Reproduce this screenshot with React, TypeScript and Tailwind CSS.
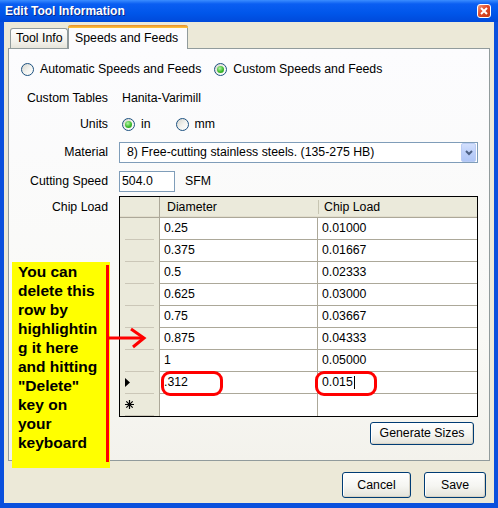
import React from "react";

const rows: [string, string][] = [
  ["0.25", "0.01000"],
  ["0.375", "0.01667"],
  ["0.5", "0.02333"],
  ["0.625", "0.03000"],
  ["0.75", "0.03667"],
  ["0.875", "0.04333"],
  ["1", "0.05000"],
];

function Radio({ checked = false }: { checked?: boolean }) {
  return (
    <span className="inline-flex size-[13px] shrink-0 items-center justify-center rounded-full border border-[#1C5180] bg-[linear-gradient(135deg,#D6D5CE,#F4F4F0_55%,#FFFFFF)]">
      {checked && (
        <span className="size-[7px] rounded-full bg-[radial-gradient(circle_at_40%_35%,#B6F5A8,#3DBB2E_55%,#1F8A1A)]" />
      )}
    </span>
  );
}

function XpButton({ label, className }: { label: string; className: string }) {
  return (
    <div
      className={`flex items-center justify-center rounded-[3px] border border-[#003C74] bg-[linear-gradient(to_bottom,#FFFFFF,#F5F5F1_55%,#E4E3DA)] shadow-[inset_-1px_-1px_0_#D8D3C6,inset_1px_1px_0_#FFFFFF] ${className}`}
    >
      {label}
    </div>
  );
}

function Row({
  label,
  className,
  children,
}: {
  label: string;
  className: string;
  children: React.ReactNode;
}) {
  return (
    <div className={`flex items-center ${className}`}>
      <span className="w-[99px] shrink-0 text-right">{label}</span>
      <div className="ml-[11px] flex items-center">{children}</div>
    </div>
  );
}

function RowHeader({ glyph }: { glyph?: "current" | "new" }) {
  return (
    <div className="flex flex-col border-r border-[#ACA899] bg-[#EBEADB]">
      <div className="flex flex-1 items-center pl-[5px]">
        {glyph === "current" && (
          <svg width="5" height="9" viewBox="0 0 5 9">
            <path d="M0 0 L5 4.5 L0 9 Z" fill="#000" />
          </svg>
        )}
        {glyph === "new" && (
          <svg width="9" height="9" viewBox="0 0 9 9" stroke="#000" strokeWidth="1.2">
            <path d="M4.5 0 V9 M0 4.5 H9 M1.3 1.3 L7.7 7.7 M7.7 1.3 L1.3 7.7" />
          </svg>
        )}
      </div>
      <div className="mx-[5px] h-px bg-[#CBC7B8]" />
    </div>
  );
}

export default function App() {
  return (
    <div className="relative h-[508px] w-[498px] overflow-hidden bg-[#0A50DD] font-['Liberation_Sans',Arial,sans-serif] text-[12.3px] text-black">
      {/* Title bar */}
      <div className="flex h-[22px] items-center justify-between bg-[linear-gradient(to_bottom,#3B8DFF_0%,#0A5EF2_18%,#0056EA_60%,#0049DA_100%)] pl-[5px] pr-[7px]">
        <span className="text-[12px] font-bold text-white [text-shadow:1px_1px_0_#0A2A8A]">
          Edit Tool Information
        </span>
        <div className="flex size-[14px] items-center justify-center rounded-[3px] border border-white bg-[linear-gradient(135deg,#F39A78,#E2492A_45%,#C43810)]">
          <svg width="8" height="8" viewBox="0 0 8 8" stroke="#fff" strokeWidth="2">
            <path d="M1 1 L7 7 M7 1 L1 7" />
          </svg>
        </div>
      </div>

      {/* Dialog body */}
      <div className="mx-[4px] flex h-[481px] flex-col bg-[#ECE9D8]">
        {/* Tabs */}
        <div className="flex h-[26px] items-end pl-[6px]">
          <div className="flex h-[20px] w-[58px] items-center rounded-t-[3px] border border-b-0 border-[#919B9C] bg-[linear-gradient(to_bottom,#FFFFFF,#F1F0EA_70%,#E6E4DA)] pl-[5px]">
            Tool Info
          </div>
          <div className="relative z-10 -mb-px flex h-[24px] w-[120px] flex-col rounded-t-[3px] border-x border-[#919B9C] bg-[#FCFCFE]">
            <div className="-mx-px h-[3px] rounded-t-[3px] bg-[linear-gradient(to_bottom,#E68B2C,#FFC73C)]" />
            <div className="flex flex-1 items-center pl-[6px]">Speeds and Feeds</div>
          </div>
        </div>

        {/* Tab panel */}
        <div className="mx-[4px] flex h-[413px] flex-col border border-[#919B9C] bg-[linear-gradient(to_bottom,#FCFCFE,#F9F9F6_70%,#F3F2EC)] pt-[12px]">
          <div className="flex h-[16px] items-center pl-[12px]">
            <Radio />
            <span className="ml-[6px]">Automatic Speeds and Feeds</span>
            <span className="ml-[13px] flex">
              <Radio checked />
            </span>
            <span className="ml-[6px]">Custom Speeds and Feeds</span>
          </div>

          <Row label="Custom Tables" className="mt-[13px] h-[16px]">
            <span className="pl-[3px]">Hanita-Varimill</span>
          </Row>

          <Row label="Units" className="mt-[10px] h-[16px]">
            <span className="flex items-center pl-[3px]">
              <Radio checked />
              <span className="ml-[6px]">in</span>
              <span className="ml-[25px] flex">
                <Radio />
              </span>
              <span className="ml-[6px]">mm</span>
            </span>
          </Row>

          <Row label="Material" className="mt-[10px] h-[21px]">
            <div className="flex h-[21px] w-[359px] items-center justify-between border border-[#7F9DB9] bg-white pl-[7px] pr-px">
              <span>8) Free-cutting stainless steels. (135-275 HB)</span>
              <div className="flex h-[19px] w-[15px] items-center justify-center rounded-[2px] border border-[#BACCF4] bg-[linear-gradient(to_bottom,#D3E0FD,#BDD0FA_50%,#B0C6F6)]">
                <svg width="8" height="6" viewBox="0 0 8 6" fill="none" stroke="#4D6185" strokeWidth="2">
                  <path d="M1 1 L4 4 L7 1" />
                </svg>
              </div>
            </div>
          </Row>

          <Row label="Cutting Speed" className="mt-[8px] h-[21px]">
            <div className="flex h-[21px] w-[56px] items-center border border-[#7F9DB9] bg-white pl-[2px]">
              504.0
            </div>
            <span className="ml-[10px]">SFM</span>
          </Row>

          {/* Chip load grid */}
          <div className="mt-[4px] flex items-start">
            <span className="flex h-[23px] w-[99px] shrink-0 items-center justify-end">Chip Load</span>
            <div className="ml-[11px] w-[359px] border border-black bg-white">
              <div className="grid h-[21px] grid-cols-[40px_158px_1fr] bg-[#EBEADB] shadow-[inset_0_-2px_0_#E2DECD]">
                <div className="border-r border-[#ACA899] border-b border-b-[#ACA899]" />
                <div className="flex items-center border-b border-[#ACA899] pl-[7px]">Diameter</div>
                <div className="flex items-center border-b border-[#ACA899]">
                  <span className="h-[14px] w-px bg-[#C7C5B2]" />
                  <span className="pl-[5px]">Chip Load</span>
                </div>
              </div>
              {rows.map(([d, c]) => (
                <div key={d} className="grid h-[22px] grid-cols-[40px_158px_1fr]">
                  <RowHeader />
                  <div className="flex items-center border-r border-b border-[#ACA899] pl-[4px]">{d}</div>
                  <div className="flex items-center border-b border-[#ACA899] pl-[4px]">{c}</div>
                </div>
              ))}
              <div className="grid h-[22px] grid-cols-[40px_158px_1fr]">
                <RowHeader glyph="current" />
                <div className="flex items-center border-r border-b border-[#ACA899] pl-[4px]">.312</div>
                <div className="flex items-center border-b border-[#ACA899] pl-[4px]">
                  0.015
                  <span className="ml-px h-[13px] w-px bg-black" />
                </div>
              </div>
              <div className="grid h-[22px] grid-cols-[40px_158px_1fr]">
                <RowHeader glyph="new" />
                <div className="border-r border-[#ACA899]" />
                <div />
              </div>
            </div>
          </div>

          <div className="mt-[5px] flex justify-end pr-[15px]">
            <XpButton label="Generate Sizes" className="h-[23px] w-[104px]" />
          </div>
        </div>

        {/* Dialog buttons */}
        <div className="flex justify-end gap-[13px] pt-[11px] pr-[8px]">
          <XpButton label="Cancel" className="h-[26px] w-[69px]" />
          <XpButton label="Save" className="h-[26px] w-[62px]" />
        </div>
      </div>

      {/* Annotation overlay */}
      <div className="absolute left-[12px] top-[262px] h-[206px] w-[98px] bg-[#FFFF00] pl-[6px] text-[15.5px] font-bold leading-[19px]">
        You can
        <br />
        delete this
        <br />
        row by
        <br />
        highlightin
        <br />
        g it here
        <br />
        and hitting
        <br />
        "Delete"
        <br />
        key on
        <br />
        your
        <br />
        keyboard
      </div>
      <div className="absolute left-[106px] top-[265px] h-[197px] w-[3px] bg-[#FF0000]" />
      <svg className="absolute left-[106px] top-[326px]" width="42" height="24" viewBox="0 0 42 24" fill="none" stroke="#FF0000" strokeWidth="3">
        <path d="M2 12 H38" />
        <path d="M25 3 L38 12 L27 21" />
      </svg>
      <div className="absolute left-[161px] top-[371px] h-[25px] w-[62px] rounded-[9px] border-[3px] border-[#FF0000]" />
      <div className="absolute left-[315px] top-[371px] h-[25px] w-[62px] rounded-[9px] border-[3px] border-[#FF0000]" />
    </div>
  );
}
